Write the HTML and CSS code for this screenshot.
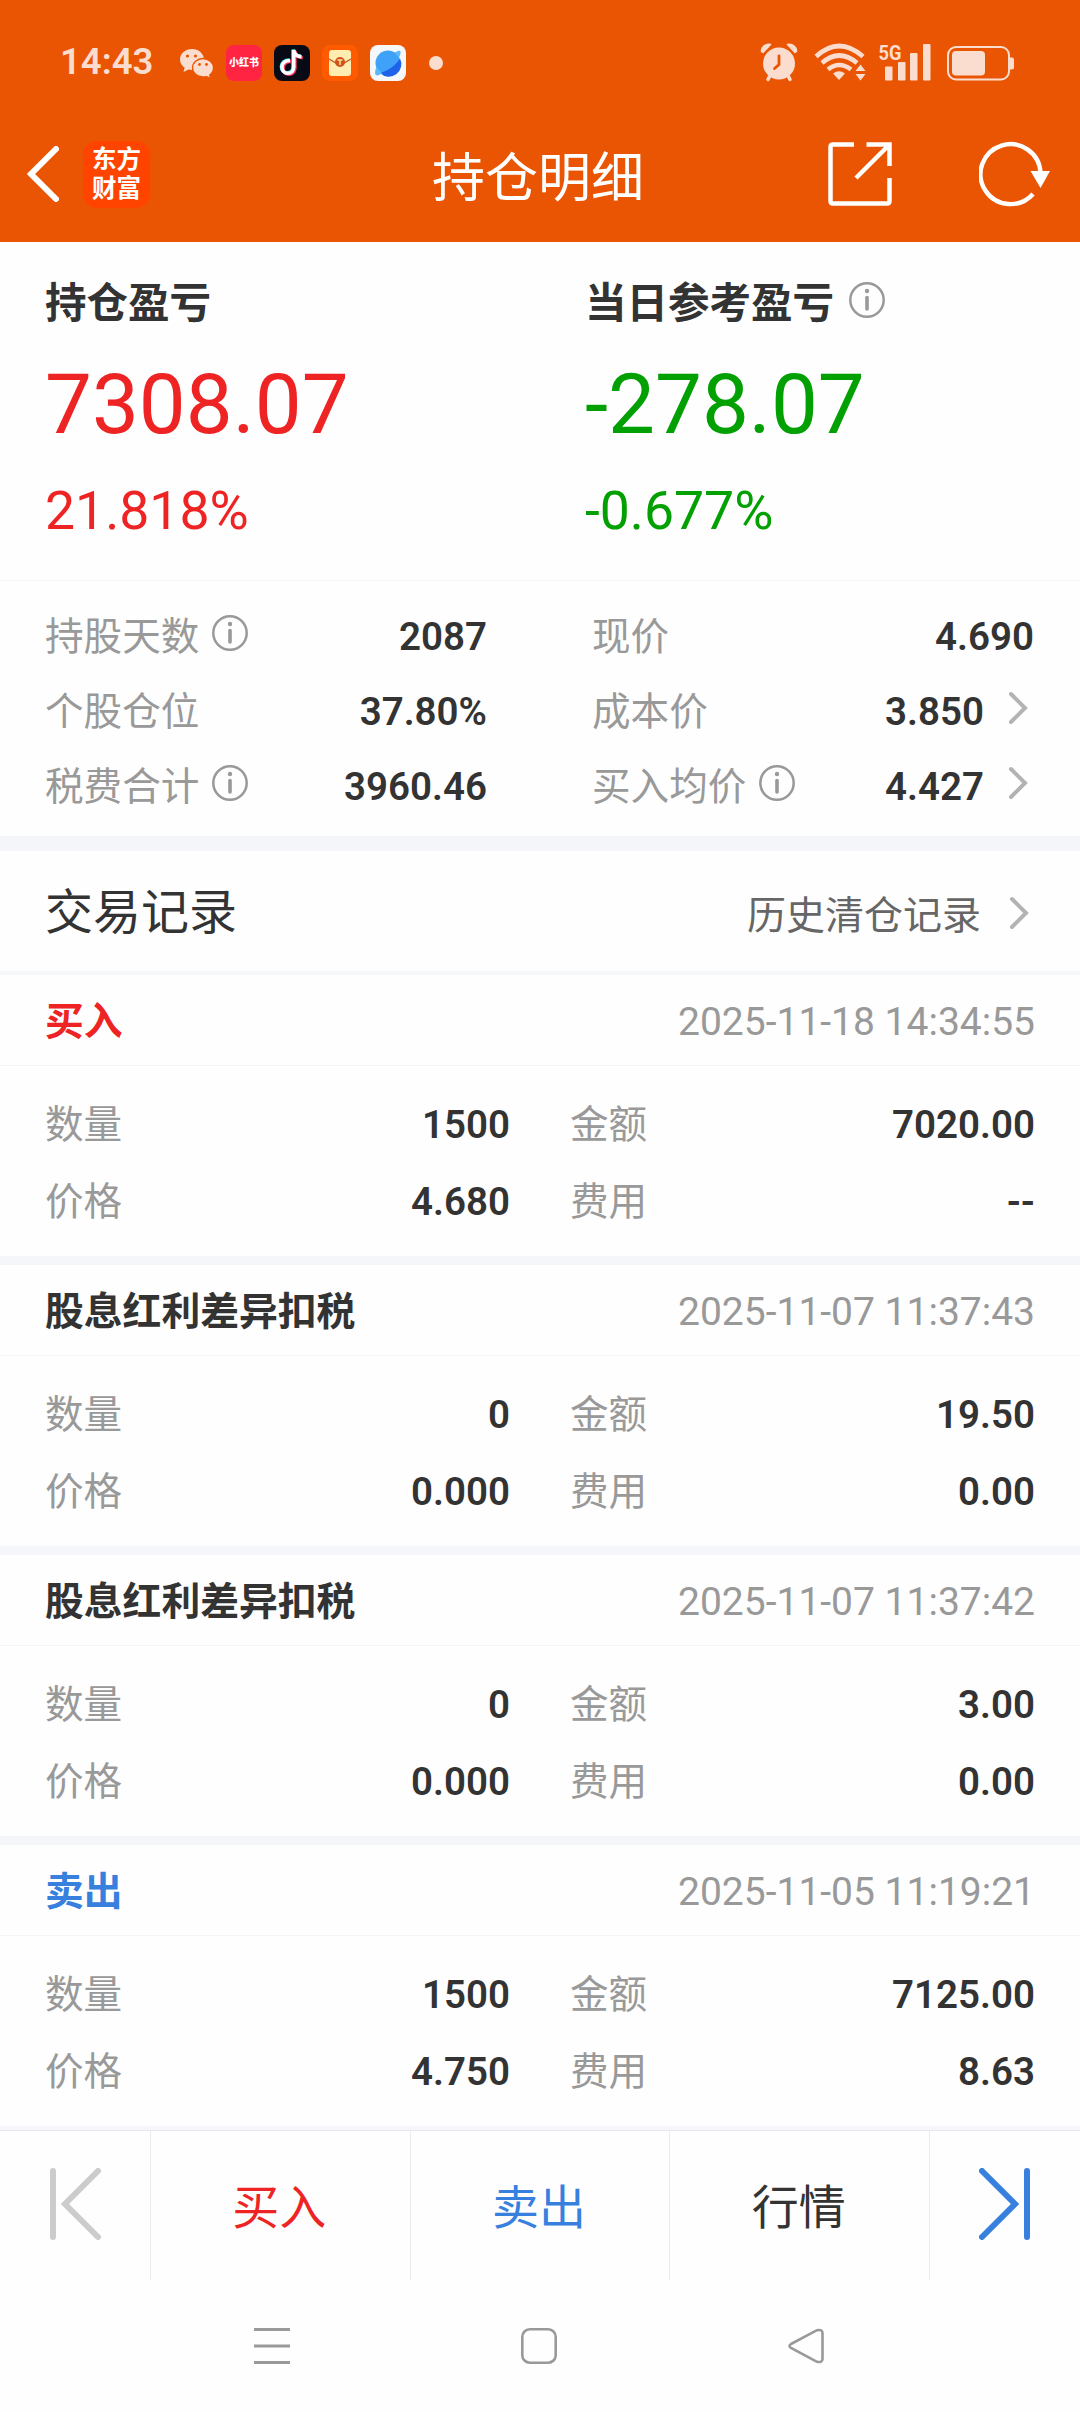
FILE: index.html
```
<!DOCTYPE html>
<html lang="zh-CN">
<head>
    <meta charset="UTF-8">
    <meta name="viewport" content="width=device-width, initial-scale=1.0">
    <title>持仓明细</title>
    <link rel="stylesheet" href="styles.css">
</head>
<body>
    <!-- 公用图标 -->
    <svg class="sprite">
        <symbol id="icon-info" viewBox="0 0 36 36">
            <circle cx="18" cy="18" r="16.7" fill="none" stroke="currentColor" stroke-width="2.5"/>
            <circle cx="18" cy="9" r="2.2" fill="currentColor"/>
            <path d="M18 15.5V27" fill="none" stroke="currentColor" stroke-width="3.6" stroke-linecap="round"/>
        </symbol>
        <symbol id="icon-arrow" viewBox="0 0 20 34">
            <path d="M3 3l14 14L3 31" fill="none" stroke="currentColor" stroke-width="4" stroke-linecap="round"/>
        </symbol>
    </svg>

    <div class="page">
        <header class="top">
            <!-- 状态栏 -->
            <div class="status-bar">
                <span class="time">14:43</span>
                <div class="status-apps">
                    <svg width="34" height="36" viewBox="0 0 34 36">
                        <path d="M12 4C5.400 4 0 8.600 0 14.500c0 3.300 1.800 6.200 4.600 8.200L3.500 27l5-2.600c1.100.3 2.300.5 3.500.5 6.600 0 12-4.600 12-10.400S18.600 4 12 4z" fill="#fbddcf"/>
                        <path d="M23 13.500c-5.800 0-10.500 4.100-10.500 9.300S17.200 32 23 32c1.200 0 2.400-.2 3.400-.5l4.200 2.200-.9-3.800c2.300-1.700 3.800-4.200 3.800-7.100 0-5.200-4.700-9.300-10.500-9.300z" fill="#fbddcf" stroke="#ea5504" stroke-width="1.300"/>
                        <g fill="#ea5504"><circle cx="7.500" cy="11" r="1.600"/><circle cx="15.500" cy="11" r="1.600"/><circle cx="19.500" cy="19.500" r="1.400"/><circle cx="26.500" cy="19.500" r="1.400"/></g>
                    </svg>
                    <span class="app-icon app-red">小红书</span>
                    <svg class="app-icon" viewBox="0 0 36 36">
                        <rect width="36" height="36" rx="8" fill="#080a16"/>
                        <g fill="none" stroke-width="3.600">
                            <path d="M16 15.500c-4.800 0-8 2.700-8 6.600 0 3.500 2.500 6.200 5.700 6.200 3.700 0 6-2.600 6-6.300V5c.5 4.300 3.200 6.500 7.800 6.800" stroke="#2ce5e6" transform="translate(-.6 -.5)"/>
                            <path d="M16 15.500c-4.800 0-8 2.700-8 6.600 0 3.500 2.500 6.200 5.700 6.200 3.700 0 6-2.600 6-6.300V5c.5 4.300 3.200 6.500 7.800 6.800" stroke="#f5375c" transform="translate(1.200 .9)"/>
                            <path d="M16 15.500c-4.800 0-8 2.700-8 6.600 0 3.500 2.500 6.200 5.700 6.200 3.700 0 6-2.600 6-6.300V5c.5 4.300 3.200 6.500 7.800 6.800" stroke="#fff"/>
                        </g>
                    </svg>
                    <svg class="app-icon" viewBox="0 0 36 36">
                        <rect width="36" height="36" rx="8" fill="#ff5a00"/>
                        <rect x="7" y="5" width="22" height="26" rx="3" fill="#ffecb0"/>
                        <path d="M7 14l7 4h8l7-4" fill="none" stroke="#c8581c" stroke-width="1.300"/>
                        <circle cx="18" cy="17" r="5" fill="#d0541a"/>
                        <path d="M15.500 15h5M18 15v5" stroke="#ffdca0" stroke-width="1.500"/>
                    </svg>
                    <svg class="app-icon" viewBox="0 0 36 36">
                        <rect width="36" height="36" rx="8" fill="#f6f7f9"/>
                        <circle cx="18" cy="18" r="12.500" fill="#3fa2f8"/>
                        <path d="M30 13.500A12.500 12.500 0 0 1 10 28C18 26 26 20 30 13.500z" fill="#1f62ea"/>
                        <path d="M25 7.500c3-2 5.500-2.500 5.500-1 .3 1.500-.3 3.500-1.500 6zM6.500 22c-1.500 3.500-2 7-.5 8s3.500 0 6-1.500z" fill="#5db8f8"/>
                    </svg>
                </div>
                <i class="more-dot"></i>
                <svg class="status-icons" width="256" height="40" viewBox="0 0 256 40">
                    <g fill="#fbddcf">
                        <!-- 闹钟 -->
                        <path d="M1.500 9.500C1 5 6 1 10.500 2.500L3 10.500zM36.500 9.500C37 5 32 1 27.500 2.500L35 10.500z" stroke="#fbddcf" stroke-width="1.500" stroke-linejoin="round"/>
                        <circle cx="19" cy="21.500" r="16"/>
                        <path d="M8 37.500l3-6M30 37.500l-3-6" stroke="#fbddcf" stroke-width="3.500" stroke-linecap="round"/>
                        <path d="M19 14v8.500l-4.500 4" fill="none" stroke="#ea5504" stroke-width="2.800" stroke-linecap="round"/>
                        <!-- 无线网 -->
                        <g fill="none" stroke="#fbddcf" stroke-width="4.600">
                            <path d="M56 14.500q23-21 47 0"/>
                            <path d="M62 21q17-15 35 0"/>
                            <path d="M68 27.500q11-9 23 0"/>
                        </g>
                        <path d="M73 31.500q6-4.500 12 0L79 38zM95.500 29l5-6.500 5 6.500zM95.500 32l5 6.500 5-6.500z"/>
                        <!-- 信号 -->
                        <text x="118.500" y="17.500" class="net" textLength="23" lengthAdjust="spacingAndGlyphs">5G</text>
                        <rect x="125" y="24.500" width="7.500" height="14" rx="1"/>
                        <rect x="138" y="20" width="7.500" height="18.500" rx="1"/>
                        <rect x="150" y="11" width="7.500" height="27.500" rx="1"/>
                        <rect x="163" y="2" width="7.500" height="36.500" rx="1"/>
                        <!-- 电池 -->
                        <rect x="188" y="5" width="61" height="32.500" rx="8" fill="none" stroke="#fbddcf" stroke-width="2"/>
                        <rect x="192" y="9" width="33" height="24.500" rx="4"/>
                        <path d="M250 15.500h2q2 0 2 2v8q0 2-2 2h-2z"/>
                    </g>
                </svg>
            </div>

            <!-- 导航栏 -->
            <div class="nav-bar">
                <svg class="back" width="32" height="56" viewBox="0 0 32 56">
                    <path d="M29 3L4 28l25 25" fill="none" stroke="#fff" stroke-width="6" stroke-linecap="round"/>
                </svg>
                <div class="logo">东方<br>财富</div>
                <h1>持仓明细</h1>
                <svg class="share" width="64" height="64" viewBox="0 0 64 64">
                    <path d="M26 2.500H5Q2.500 2.500 2.500 5v54q0 2.500 2.500 2.500h54q2.500 0 2.500-2.500V36M38.500 2.500h23V24M61 3L28 36" fill="none" stroke="#fff" stroke-width="4.500"/>
                </svg>
                <svg class="refresh" width="72" height="66" viewBox="0 0 72 66">
                    <path d="M54 53A30 30 0 1 1 61.500 32" fill="none" stroke="#fff" stroke-width="4.400"/>
                    <path d="M51.500 30h19.500L61.500 47z" fill="#fff"/>
                </svg>
            </div>
        </header>

        <main class="content">
            <!-- 盈亏 -->
            <section class="profit">
                <div class="profit-item red">
                    <h2>持仓盈亏</h2>
                    <div class="amount">7308.07</div>
                    <div class="percent">21.818%</div>
                </div>
                <div class="profit-item green">
                    <h2>当日参考盈亏<svg class="info"><use href="#icon-info"/></svg></h2>
                    <div class="amount">-278.07</div>
                    <div class="percent">-0.677%</div>
                </div>
            </section>

            <!-- 持仓数据 -->
            <section class="stats">
                <div class="stats-col">
                    <div class="row"><span class="label">持股天数</span><svg class="info"><use href="#icon-info"/></svg><b>2087</b></div>
                    <div class="row"><span class="label">个股仓位</span><b>37.80%</b></div>
                    <div class="row"><span class="label">税费合计</span><svg class="info"><use href="#icon-info"/></svg><b>3960.46</b></div>
                </div>
                <div class="stats-col">
                    <div class="row"><span class="label">现价</span><b>4.690</b></div>
                    <div class="row"><span class="label">成本价</span><b>3.850</b><svg class="arrow"><use href="#icon-arrow"/></svg></div>
                    <div class="row"><span class="label">买入均价</span><svg class="info"><use href="#icon-info"/></svg><b>4.427</b><svg class="arrow"><use href="#icon-arrow"/></svg></div>
                </div>
            </section>

            <!-- 交易记录 -->
            <section class="records-title">
                <h3>交易记录</h3>
                <a>历史清仓记录</a>
                <svg class="arrow"><use href="#icon-arrow"/></svg>
            </section>

            <section class="record">
                <div class="record-head"><strong class="red">买入</strong><time>2025-11-18 14:34:55</time></div>
                <div class="record-body">
                    <div class="cell"><span class="label">数量</span><b>1500</b></div>
                    <div class="cell"><span class="label">金额</span><b>7020.00</b></div>
                    <div class="cell"><span class="label">价格</span><b>4.680</b></div>
                    <div class="cell"><span class="label">费用</span><b>--</b></div>
                </div>
            </section>

            <section class="record">
                <div class="record-head"><strong>股息红利差异扣税</strong><time>2025-11-07 11:37:43</time></div>
                <div class="record-body">
                    <div class="cell"><span class="label">数量</span><b>0</b></div>
                    <div class="cell"><span class="label">金额</span><b>19.50</b></div>
                    <div class="cell"><span class="label">价格</span><b>0.000</b></div>
                    <div class="cell"><span class="label">费用</span><b>0.00</b></div>
                </div>
            </section>

            <section class="record">
                <div class="record-head"><strong>股息红利差异扣税</strong><time>2025-11-07 11:37:42</time></div>
                <div class="record-body">
                    <div class="cell"><span class="label">数量</span><b>0</b></div>
                    <div class="cell"><span class="label">金额</span><b>3.00</b></div>
                    <div class="cell"><span class="label">价格</span><b>0.000</b></div>
                    <div class="cell"><span class="label">费用</span><b>0.00</b></div>
                </div>
            </section>

            <section class="record">
                <div class="record-head"><strong class="blue">卖出</strong><time>2025-11-05 11:19:21</time></div>
                <div class="record-body">
                    <div class="cell"><span class="label">数量</span><b>1500</b></div>
                    <div class="cell"><span class="label">金额</span><b>7125.00</b></div>
                    <div class="cell"><span class="label">价格</span><b>4.750</b></div>
                    <div class="cell"><span class="label">费用</span><b>8.63</b></div>
                </div>
            </section>
        </main>

        <!-- 底部操作栏 -->
        <footer class="actions">
            <div class="step">
                <svg width="52" height="72" viewBox="0 0 52 72"><path d="M4 3v66M49 3L16 36l33 33" fill="none" stroke="#ccc" stroke-width="6" stroke-linecap="round"/></svg>
            </div>
            <div class="action red">买入</div>
            <div class="action blue">卖出</div>
            <div class="action">行情</div>
            <div class="step">
                <svg width="52" height="72" viewBox="0 0 52 72"><path d="M48 3v66M3 3l33 33L3 69" fill="none" stroke="#3780de" stroke-width="6" stroke-linecap="round"/></svg>
            </div>
        </footer>

        <!-- 系统导航 -->
        <div class="system-nav">
            <svg width="36" height="36" viewBox="0 0 36 36"><path d="M0 1.500h36M0 18h36M0 34.500h36" stroke="#999" stroke-width="3"/></svg>
            <svg width="36" height="36" viewBox="0 0 36 36"><rect x="1.300" y="1.300" width="33.400" height="33.400" rx="7.500" fill="none" stroke="#999" stroke-width="2.600"/></svg>
            <svg width="36" height="36" viewBox="0 0 36 36"><path d="M3 16L29 2.200Q34.500 1 34.500 5v26q0 4-5.500 2.800L3 20q-3-2 0-4z" fill="none" stroke="#999" stroke-width="2.600"/></svg>
        </div>
    </div>
</body>
</html>
```

FILE: styles.css
```
/* 全局样式 */
* {
    box-sizing: border-box;
}

body {
    margin: 0;
    background-color: #fefefe;
    color: #333;
    font-family: Roboto, 'Noto Sans CJK SC', sans-serif;
    font-size: 39px;
    line-height: 48px;
}

h1, h2, h3 {
    margin: 0;
}

svg {
    display: block;
    flex: none;
}

.sprite {
    display: none;
}

.page {
    display: flex;
    flex-direction: column;
    width: 1080px;
    height: 2412px;
    overflow: hidden;
}

.red {
    color: #ee2424;
}

.green {
    color: #02a002;
}

.blue {
    color: #3780de;
}

/* 顶部 */
.top {
    flex: none;
    height: 242px;
    background-color: #ea5504;
}

.status-bar {
    display: flex;
    align-items: center;
    height: 106px;
    padding: 20px 64px 0 60px;
}

.time {
    width: 120px;
    color: #fbddcf;
    font-size: 36.500px;
    font-weight: 600;
    line-height: 44px;
    padding-bottom: 2px;
}

.status-apps {
    display: flex;
    align-items: center;
    gap: 12px;
}

.app-icon {
    width: 36px;
    height: 36px;
}

.app-red {
    border-radius: 8px;
    background-color: #ff2442;
    color: #fff;
    font-size: 10px;
    font-weight: 900;
    line-height: 36px;
    text-align: center;
    white-space: nowrap;
}

.more-dot {
    width: 14px;
    height: 14px;
    margin-left: 23px;
    border-radius: 50%;
    background-color: #fbddcf;
}

.status-icons {
    margin: -2px 0 0 auto;
}

.net {
    font-size: 21px;
    font-weight: 700;
}

.nav-bar {
    display: flex;
    align-items: center;
    height: 136px;
    padding: 0 29px 0 27px;
}

.logo {
    width: 67px;
    height: 67px;
    margin-left: 24px;
    padding-top: 4px;
    border-radius: 14px;
    background-color: #ff4400;
    color: #fff;
    font-size: 24.5px;
    font-weight: 700;
    line-height: 29px;
    text-align: center;
}

h1 {
    flex: 1;
    padding: 9px 0 0 282px;
    color: #fff;
    font-size: 53px;
    font-weight: 400;
    line-height: 64px;
}

.refresh {
    margin-left: 87px;
}

/* 盈亏 */
.content {
    flex: none;
    height: 1888px;
    overflow: hidden;
}

.profit {
    display: flex;
    height: 339px;
    padding: 38px 0 0 45px;
    border-bottom: 1px solid #f4f5f7;
}

.profit-item {
    flex: none;
    width: 540px;
}

.profit-item h2 {
    display: flex;
    color: #333;
    font-size: 41.500px;
}

.profit-item .info {
    margin: 2px 0 0 15px;
}

.amount {
    margin-top: 27px;
    font-size: 83.500px;
    line-height: 100px;
}

.percent {
    margin-top: 24px;
    font-size: 53.500px;
    line-height: 64px;
}

.info {
    width: 36px;
    height: 36px;
    color: #999;
}

.arrow {
    width: 20px;
    height: 34px;
    color: #b3b3b3;
}

/* 持仓数据 */
.stats {
    display: flex;
    gap: 105px;
    height: 270px;
    padding: 18px 45px 0;
    border-bottom: 15px solid #f5f6fa;
}

.stats-col {
    width: 442px;
}

.row {
    display: flex;
    align-items: center;
    height: 75px;
}

.label {
    color: #999;
    font-size: 38.600px;
}

.row .info {
    margin: -7px 0 0 13px;
}

.row .arrow,
.records-title .arrow {
    margin: -7px 6px 0 24px;
}

b {
    margin-left: auto;
    font-size: 38.500px;
    font-weight: 600;
}

/* 交易记录 */
.records-title {
    display: flex;
    align-items: center;
    height: 124px;
    padding: 4px 45px 0;
    border-bottom: 4px solid #f5f8f9;
}

.records-title h3 {
    flex: 1;
    font-size: 48px;
    font-weight: 400;
}

.records-title a {
    padding-top: 6px;
    color: #666;
}

.records-title .arrow {
    margin: -1px 6px 0 28px;
}

.record {
    height: 290px;
    border-bottom: 9px solid #f5f6fa;
}

.record-head {
    display: flex;
    align-items: center;
    justify-content: space-between;
    height: 91px;
    padding: 3px 45px 0;
    border-bottom: 1px solid #f4f5f7;
}

.record-head strong {
    padding-top: 1px;
    font-size: 38.800px;
}

.record-head time {
    color: #999;
}

.record-body {
    display: grid;
    grid-template-columns: 465px 465px;
    column-gap: 60px;
    padding: 20px 45px 0;
}

.cell {
    display: flex;
    align-items: center;
    height: 77px;
}

/* 底部操作栏 */
.actions {
    display: flex;
    flex: none;
    height: 150px;
    border-top: 1px solid #e8e8e8;
}

.step,
.action {
    display: flex;
    align-items: center;
    justify-content: center;
}

.step {
    width: 150px;
    padding-bottom: 4px;
}

.action {
    flex: 1;
    padding: 4px 2px 0 0;
    border-left: 1px solid #ebebeb;
    font-size: 47px;
}

.action:nth-child(4) {
    border-right: 1px solid #ebebeb;
}

.system-nav {
    display: flex;
    flex: 1;
    justify-content: space-between;
    padding: 48px 256px 0 254px;
}
```
